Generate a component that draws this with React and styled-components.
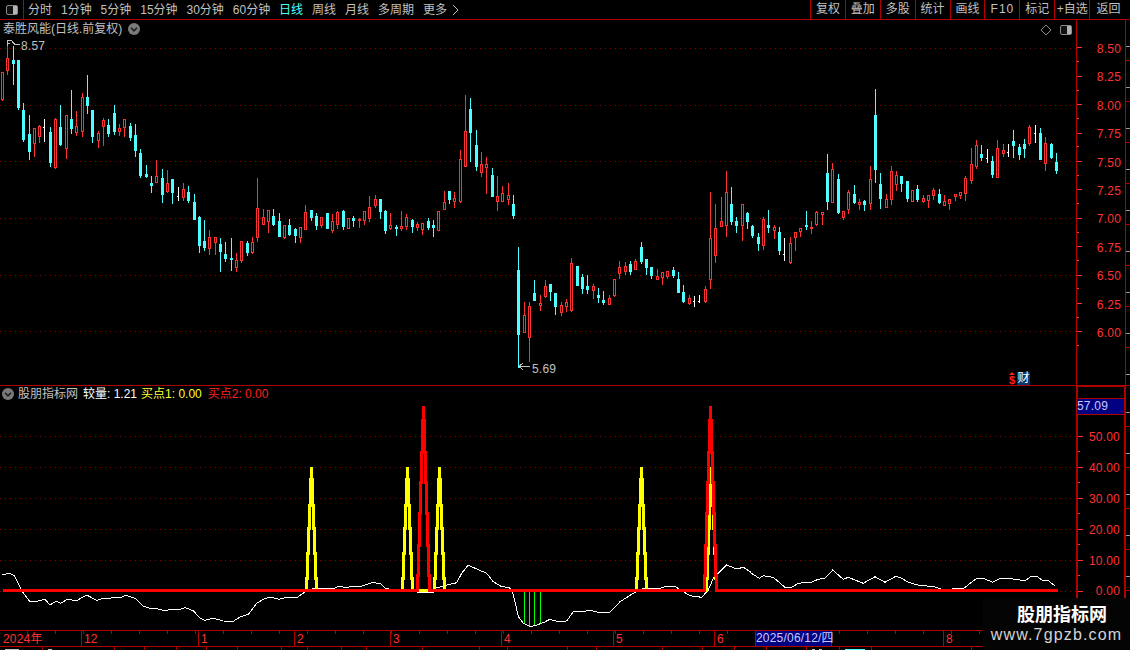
// 日K线 + 副图指标 stock chart screen
import React from "react";
import styled, { createGlobalStyle } from "styled-components";

const RED_LINE = "#b00000";
const RED_TEXT = "#ff3232";
const GREY_TEXT = "#c0c0c0";
const FONT = `"Liberation Sans", "Noto Sans CJK SC", sans-serif`;

const GlobalStyle = createGlobalStyle`
  html, body {
    margin: 0;
    padding: 0;
    background: #000;
  }
  body {
    font-family: ${FONT};
    font-size: 12px;
  }
`;

const Root = styled.div`
  position: relative;
  width: 1130px;
  height: 650px;
  overflow: hidden;
  background: #000;
  color: ${GREY_TEXT};
  display: flex;
  flex-direction: column;
`;

const Toolbar = styled.div`
  display: flex;
  align-items: stretch;
  height: 19px;
  flex: none;
  box-sizing: content-box;
  border-bottom: 1px solid ${RED_LINE};
`;

const ToolIcon = styled.div`
  width: 23px;
  border-right: 1px solid ${RED_LINE};
  display: flex;
  align-items: center;
  justify-content: center;
`;

const Tabs = styled.div`
  display: flex;
  align-items: center;
  gap: 8.95px;
  padding-left: 4px;
  line-height: 18px;
`;

const Tab = styled.span`
  display: flex;
  align-items: center;
  color: ${(p) => (p.$active ? "#4dffff" : GREY_TEXT)};
  white-space: nowrap;
`;

const TabChevron = styled.svg`
  margin-left: 5px;
`;

const Buttons = styled.div`
  display: flex;
  margin-left: auto;
  width: 320px;
`;

const ToolButton = styled.div`
  width: 34.9px;
  flex: ${(p) => (p.$last ? "1" : "none")};
  box-sizing: border-box;
  border-left: 1px solid ${RED_LINE};
  padding-right: ${(p) => (p.$last ? "3px" : "0")};
  line-height: 18px;
  text-align: center;
  white-space: nowrap;
  letter-spacing: ${(p) => (p.$wide ? "1px" : "0")};
`;

const Pane = styled.div`
  display: flex;
  flex: none;
  height: ${(p) => p.$height}px;
  border-bottom: ${(p) => (p.$ruled ? `1px solid ${RED_LINE}` : "none")};
`;

const Plot = styled.div`
  position: relative;
  width: 1076px;
  flex: none;
`;

const ChartSvg = styled.svg`
  display: block;
  width: 1076px;
  height: 100%;
`;

const PaneTitle = styled.div`
  position: absolute;
  left: ${(p) => p.$left}px;
  top: ${(p) => p.$top}px;
  display: flex;
  align-items: center;
  line-height: 16px;
  white-space: nowrap;
`;

const TitleChunk = styled.span`
  color: ${(p) => p.$color || GREY_TEXT};
  margin-left: ${(p) => p.$gap || 0}px;
`;

const RoundIcon = styled.span`
  width: 12px;
  height: 12px;
  border-radius: 50%;
  background: #7a7a7a;
  display: flex;
  align-items: center;
  justify-content: center;
  margin-left: ${(p) => p.$gap || 0}px;
  margin-right: ${(p) => p.$after || 0}px;
`;

const PaneTools = styled.div`
  position: absolute;
  right: 3px;
  top: 4px;
  display: flex;
  align-items: center;
  gap: 7px;
`;

const PriceNote = styled.span`
  position: absolute;
  left: ${(p) => p.$left}px;
  top: ${(p) => p.$top}px;
  line-height: 14px;
  color: ${GREY_TEXT};
  letter-spacing: 0.2px;
`;

const FlagRow = styled.div`
  position: absolute;
  right: 46px;
  bottom: 0;
  height: 13px;
  display: flex;
  align-items: center;
  gap: 2px;
`;

const DollarMark = styled.span`
  display: flex;
  flex-direction: column;
  align-items: center;
  color: #ff2020;
  font-weight: bold;
  font-size: 11px;
  line-height: 9px;

  &::before {
    content: "";
    border-left: 3px solid transparent;
    border-right: 3px solid transparent;
    border-bottom: 3px solid #ff2020;
    margin-bottom: 1px;
  }
`;

const CaiMark = styled.span`
  width: 13px;
  height: 13px;
  background: #003a70;
  color: #fff;
  line-height: 13px;
  font-size: 12px;
  text-align: center;
`;

const Axis = styled.div`
  width: 50px;
  flex: none;
  box-sizing: border-box;
  border-left: ${(p) => (p.$thick ? 2 : 1)}px solid ${RED_LINE};
  border-right: ${(p) => (p.$thick ? 2 : 1)}px solid ${RED_LINE};
  border-top: ${(p) => (p.$thick ? `1px solid ${RED_LINE}` : "none")};
  padding-top: ${(p) => p.$paddingTop}px;
  display: flex;
  flex-direction: column;
`;

const AxisRow = styled.div`
  height: ${(p) => p.$height}px;
  flex: none;
  display: flex;
  align-items: center;
  background: linear-gradient(${RED_TEXT}, ${RED_TEXT}) left bottom / 2px 1px no-repeat;
`;

const AxisTick = styled.span`
  width: 5px;
  height: 1px;
  background: ${RED_TEXT};
`;

const AxisLabel = styled.span`
  margin-left: auto;
  padding-right: 4px;
  padding-top: ${(p) => (p.$low ? 2 : 0)}px;
  color: ${RED_TEXT};
  letter-spacing: 0.2px;
`;

const PriceTag = styled.div`
  height: 15px;
  flex: none;
  margin-bottom: 6.5px;
  margin-left: -1px;
  border-top: 1px solid ${RED_LINE};
  border-bottom: 1px solid ${RED_LINE};
  background: #000080;
  color: #c8c8ff;
  line-height: 15px;
  letter-spacing: 0.2px;
`;

const EdgeStrip = styled.div`
  flex: 1;
  background: repeating-linear-gradient(
    180deg,
    transparent 0 26px,
    #9a9a9a 26px 27px,
    transparent 27px 40px,
    ${RED_LINE} 40px 41px
  );
`;

const DateAxis = styled.div`
  display: flex;
  height: 15px;
  flex: none;
  border-top: 1px solid ${RED_LINE};
  border-bottom: 1px solid ${RED_LINE};
  background: repeating-linear-gradient(90deg, transparent 0 27px, ${RED_LINE} 27px 28px) left top / 100% 3px no-repeat;
`;

const DateCell = styled.div`
  position: relative;
  width: ${(p) => p.$width}px;
  flex: none;
  box-sizing: border-box;
  border-left: ${(p) => (p.$first ? "none" : `1px solid ${RED_LINE}`)};
  padding-left: ${(p) => (p.$first ? 3 : 2)}px;
  color: ${RED_TEXT};
  line-height: 16px;
  letter-spacing: 0.2px;
`;

const DateCursor = styled.div`
  position: absolute;
  left: 40px;
  top: 0;
  width: 77px;
  height: 15px;
  box-sizing: border-box;
  background: #000080;
  border-left: 1px solid ${RED_LINE};
  border-right: 1px solid ${RED_LINE};
  color: #c8c8ff;
  line-height: 15px;
  text-align: center;
  white-space: nowrap;
`;

const BottomStrip = styled.div`
  display: flex;
  flex: 1;
`;

const StripCell = styled.div`
  width: ${(p) => p.$width}px;
  flex: none;
  box-sizing: border-box;
  border-right: 1px solid ${RED_LINE};
  display: flex;
  align-items: flex-end;
  gap: 4px;
  padding-left: 5px;
`;

const StripChip = styled.span`
  width: ${(p) => p.$width}px;
  height: 1px;
  background: ${(p) => p.$color};
`;

const Watermark = styled.div`
  position: absolute;
  left: 983px;
  top: 598px;
  width: 147px;
  height: 52px;
  background: #040404;
  display: flex;
  flex-direction: column;
  align-items: center;
  padding-top: 7px;
  box-sizing: border-box;
`;

const MarkTitle = styled.div`
  color: #fff;
  font-weight: bold;
  font-size: 18px;
  line-height: 20px;
  margin-left: 11px;
  white-space: nowrap;
`;

const MarkUrl = styled.div`
  color: #d4d4d4;
  font-size: 16px;
  line-height: 19px;
  letter-spacing: 1.15px;
  white-space: nowrap;
`;

// kind, wick top, body top, body bottom, wick bottom (page y pixels), one per trading day
const CANDLES = `r72,72,99,100 r41,58,70,74 c46,60,63,84 c60,60,107,109 c103,110,139,141 c115,134,151,159 r128,128,143,156
r125,126,136,142 w119,127,127,141 c127,132,162,166 r118,119,167,168 c105,127,144,145 r115,115,148,158 c90,119,128,133
r111,126,132,135 r93,97,131,136 c75,97,105,113 c110,110,136,142 r131,133,140,147 r118,120,126,145 c119,125,133,136
c105,113,131,134 r124,128,131,135 r119,119,127,136 c123,126,137,140 c124,135,150,156 c149,153,175,177 c165,174,176,177
c176,183,185,192 r160,176,182,182 c169,178,194,202 r170,183,191,192 c179,179,192,203 w187,196,196,200 r183,189,197,200
c186,192,200,202 c194,202,219,219 c216,217,245,252 c220,241,247,250 r230,237,248,254 r237,237,242,254 c238,244,251,271
c242,254,258,261 c238,258,259,270 r253,260,267,271 r241,241,260,262 c241,243,252,255 r237,242,252,253 r178,208,237,241
r209,217,224,224 r210,210,221,232 c209,216,224,225 c213,221,236,236 r225,225,237,238 c219,225,234,235 c228,229,235,242
r227,227,237,242 r205,212,229,229 c210,210,217,220 c213,216,225,229 r217,217,225,227 c213,213,228,228 r214,221,230,232
r211,212,224,228 c210,211,226,229 r218,218,228,228 c216,218,220,226 r218,219,220,227 r211,211,220,224 r196,207,218,221
r195,199,205,207 c199,199,211,218 c210,211,230,233 r213,225,228,229 c225,227,228,235 r211,226,228,230 r214,217,226,229
c219,220,226,232 r222,224,227,230 r223,223,229,234 c218,221,227,229 c220,225,227,236 r211,211,230,230 r191,202,209,209
c191,191,199,203 r192,198,201,207 r150,159,201,202 r95,131,166,166 c98,109,132,161 c130,145,166,170 r152,164,172,176
r157,164,167,193 c168,175,196,196 r176,196,201,210 r186,193,201,201 r183,195,199,204 c195,204,215,218 c247,270,334,367
r302,315,332,332 r302,306,337,361 c280,293,300,300 r295,303,305,310 r280,286,296,297 c284,284,291,300 c293,293,306,314
r302,305,312,315 r299,302,306,311 r258,263,310,311 c266,266,285,285 c274,277,288,293 c275,286,289,293 r284,286,290,298
c288,295,297,302 c291,300,302,304 r295,298,304,304 r279,279,295,296 r261,267,273,278 r262,266,271,274 c261,264,271,274
r259,261,269,269 c242,247,261,263 c259,259,267,274 c267,267,275,278 r269,276,279,279 r272,272,277,284 r271,271,276,278
c267,270,275,277 c272,279,292,292 c285,292,301,302 r295,298,303,304 w296,301,301,306 w295,301,301,302 r286,289,301,302
r192,238,279,288 r204,228,255,262 r197,221,226,226 r171,192,225,236 c187,204,221,224 c217,221,225,232 r204,204,225,240
c212,213,221,228 c225,226,235,237 c233,237,243,250 r217,219,245,249 c210,225,227,232 r225,227,230,238 c227,232,250,254
w238,254,254,260 r237,243,262,263 r232,232,237,250 r228,228,231,236 c211,225,226,229 r221,227,228,233 r211,212,224,225
r212,212,214,224 c154,173,201,209 r163,169,202,202 c174,179,212,213 r211,211,217,219 r190,192,209,213 c185,194,202,203
r199,202,204,209 c200,201,204,210 r166,179,203,209 c89,115,169,182 c173,184,198,208 r194,199,207,207 r166,171,199,204
r171,175,184,190 c176,176,183,191 c181,181,198,201 r190,190,201,201 c185,189,199,201 r195,198,201,202 r195,195,200,207
r188,190,195,199 c189,194,202,203 r195,201,205,205 r199,199,203,209 r194,194,196,200 r192,192,195,198 r176,178,193,200
r148,164,180,183 r140,145,166,168 c145,154,157,160 w149,158,158,162 c156,161,174,177 r140,148,177,177 r144,150,153,156
w144,152,152,156 c130,141,145,157 c144,147,154,159 c139,144,148,157 r125,127,143,145 w125,133,133,142 c128,133,159,159
r137,143,163,170 c143,144,157,158 c153,162,170,173`
  .split(/\s+/)
  .map((item) => {
    const [top, bodyTop, bodyBottom, bottom] = item.slice(1).split(",").map(Number);
    return { kind: item[0], top, bodyTop, bodyBottom, bottom };
  });

const CANDLE_COLOR = { r: "#ff3232", c: "#4dffff", w: "#ffffff" };

const Candle = ({ x, kind, top, bodyTop, bodyBottom, bottom }) => {
  const color = CANDLE_COLOR[kind];
  if (kind === "w") {
    return (
      <g fill={color}>
        <rect x={x} y={top} width={1} height={bottom - top + 1} />
        <rect x={x - 1} y={bodyTop} width={1} height={1} />
      </g>
    );
  }
  const height = bodyBottom - bodyTop + 1;
  return (
    <g fill={color}>
      <rect x={x} y={top} width={1} height={bottom - top + 1} />
      <rect x={x - 1} y={bodyTop} width={3} height={height} />
      {kind === "r" && height > 2 && <rect x={x} y={bodyTop + 1} width={1} height={height - 2} fill="#000" />}
    </g>
  );
};

const dotted = (y, to = 1076) => (
  <line key={y} x1={0} x2={to} y1={y + 0.5} y2={y + 0.5} stroke="#8c0000" strokeWidth={1} strokeDasharray="1 4" />
);

// a spike is a staircase of short verticals going up to a peak and back to the zero line
const YELLOW_STEPS = [[5, 578], [4, 553], [3, 528], [2, 505], [1, 479], [0, 466]];
const RED_STEPS = [[6, 575], [5, 545], [4, 513], [3, 482], [2, 452], [1, 420], [0, 405]];

const spikePath = (cx, steps) => {
  let d = `L${cx - steps[0][0]} 590`;
  steps.forEach(([dx, y], i) => {
    if (i > 0) d += `L${cx - dx} ${steps[i - 1][1]}`;
    d += `L${cx - dx} ${y}`;
  });
  for (let i = steps.length - 1; i >= 0; i--) {
    d += `L${cx + steps[i][0]} ${steps[i][1]}`;
    d += `L${cx + steps[i][0]} ${i > 0 ? steps[i - 1][1] : 590}`;
  }
  return d;
};

const linePath = (centres, steps) => `M2 590${centres.map((c) => spikePath(c, steps)).join("")}L1057 590`;

const z9 = (pts) => pts.map(([x, y]) => `${(x / 3).toFixed(1)},${(560 + y / 3).toFixed(1)}`);
const z10 = (pts) => pts.map(([x, y]) => `${(380 + x / 3).toFixed(1)},${(560 + y / 3).toFixed(1)}`);
const z11 = (pts) => pts.map(([x, y]) => `${(750 + x / 3).toFixed(1)},${(560 + y / 3).toFixed(1)}`);

const WHITE_LINE = [
  ...z9([[5,43],[30,41],[42,46],[52,65],[65,92],[88,123],[110,124],[135,118],[150,135],[168,124],[182,130],[200,119],[232,121],[260,105],[290,121],[310,115],[360,113],[378,106],[405,115],[430,138],[455,147],[470,146],[490,151],[540,148],[555,143],[580,152],[600,175],[615,181],[640,175],[670,183],[700,184],[720,171],[745,163],[770,130],[795,115],[815,112],[838,118],[855,113],[890,113],[915,96],[925,88],[960,85],[975,86],[1000,86],[1015,79],[1035,82],[1085,78],[1115,68],[1140,70]]),
  ...z10([[0,70],[15,85],[40,90],[100,92],[115,97],[160,97],[165,85],[190,78],[230,68],[245,40],[265,15],[285,25],[320,40],[340,65],[365,80],[385,82],[395,88],[405,125],[415,170],[430,190],[450,200],[470,195],[490,188],[510,178],[530,184],[560,183],[580,155],[635,152],[655,157],[690,157],[720,125],[760,100],[790,85],[840,85],[860,79],[885,79],[905,92],[930,107],[965,112],[985,90],[1000,55],[1040,15],[1070,27],[1090,22],[1110,35]]),
  ...z11([[0,37],[28,55],[40,47],[70,52],[105,82],[125,82],[145,70],[185,66],[205,58],[225,55],[248,30],[280,58],[295,52],[340,70],[375,50],[405,67],[435,50],[450,52],[475,67],[510,77],[550,79],[575,88],[640,86],[680,55],[700,55],[728,67],[750,55],[790,57],[825,62],[845,48],[860,48],[875,60],[895,62],[915,78]]),
].join(" ");

const GREEN_BARS = [
  [524, 623],
  [529, 626],
  [534, 625],
  [540, 623],
];

const MAIN_LABELS = ["8.50", "8.25", "8.00", "7.75", "7.50", "7.25", "7.00", "6.75", "6.50", "6.25", "6.00"];
const SUB_LABELS = ["50.00", "40.00", "30.00", "20.00", "10.00", "0.00"];
const TABS = ["分时", "1分钟", "5分钟", "15分钟", "30分钟", "60分钟", "日线", "周线", "月线", "多周期", "更多"];
const TOOL_BUTTONS = ["复权", "叠加", "多股", "统计", "画线", "F10", "标记", "+自选"];
const DATE_CELLS = [
  ["2024年", 81],
  ["12", 117],
  ["1", 96],
  ["2", 96],
  ["3", 111],
  ["4", 112],
  ["5", 101],
  ["6", 229],
  ["8", 200],
];
// bottom tab row, only its top edge is on screen
const STRIP_CELLS = [
  [43, [[14, "#c0c0c0"]]],
  [72, [[4, "#c0c0c0"]]],
  [30], [32], [30], [31], [44], [26], [34], [25], [56], [57], [28], [60], [29], [66], [40], [32], [32], [40],
  [33, [[3, "#c0c0c0"], [3, "#c0c0c0"]]],
  [32, [[20, "#4dffff"]]],
  [100],
];

const SplitIcon = () => (
  <svg width="14" height="12" viewBox="0 0 14 12">
    <rect x="1.5" y="1.5" width="11" height="9" rx="1.5" fill="#111" stroke="#8a8a8a" />
    <rect x="8" y="2" width="4" height="8" fill="#b4b4b4" />
  </svg>
);

const Chevron = () => (
  <svg width="12" height="12" viewBox="0 0 12 12">
    <path d="M3 4.8 L6 7.8 L9 4.8" fill="none" stroke="#1c1c1c" strokeWidth="1.6" />
  </svg>
);

const App = () => (
  <Root>
    <GlobalStyle />
    <Toolbar>
      <ToolIcon>
        <SplitIcon />
      </ToolIcon>
      <Tabs>
        {TABS.map((tab) => (
          <Tab key={tab} $active={tab === "日线"}>
            {tab}
            {tab === "更多" && (
              <TabChevron width="7" height="12" viewBox="0 0 7 12">
                <path d="M1 1 L6 6 L1 11" fill="none" stroke="#c0c0c0" />
              </TabChevron>
            )}
          </Tab>
        ))}
      </Tabs>
      <Buttons>
        {TOOL_BUTTONS.map((label) => (
          <ToolButton key={label} $wide={label === "F10"}>
            {label}
          </ToolButton>
        ))}
        <ToolButton $last>返回</ToolButton>
      </Buttons>
    </Toolbar>

    <Pane $height={365} $ruled>
      <Plot>
        <ChartSvg viewBox="0 20 1076 365" shapeRendering="crispEdges">
          {[48, 105, 161, 218, 275, 331].map((y) => dotted(y))}
          {CANDLES.map((c, i) => (
            <Candle key={i} x={Math.floor(2.4 + 5.323 * i)} {...c} />
          ))}
          <g fill="none" stroke="#c0c0c0">
            <path d="M7.5 46V40.5H11.5M7.5 43.5H10M12 41.5L15 44.5H20" />
            <path d="M530 366.5H519M519 366.5L523 363M519 366.5L523 370" />
          </g>
        </ChartSvg>
        <PaneTitle $left={3} $top={1}>
          <TitleChunk>泰胜风能(日线.前复权)</TitleChunk>
          <RoundIcon $gap={6}>
            <Chevron />
          </RoundIcon>
        </PaneTitle>
        <PaneTools>
          <svg width="12" height="12" viewBox="0 0 12 12">
            <path d="M6 1L11 6L6 11L1 6Z" fill="none" stroke="#8a8a8a" />
          </svg>
          <SplitIcon />
        </PaneTools>
        <PriceNote $left={21} $top={19}>
          8.57
        </PriceNote>
        <PriceNote $left={532} $top={342}>
          5.69
        </PriceNote>
        <FlagRow>
          <DollarMark>$</DollarMark>
          <CaiMark>财</CaiMark>
        </FlagRow>
      </Plot>
      <Axis $paddingTop={13.8}>
        {MAIN_LABELS.map((label) => (
          <AxisRow key={label} $height={28.4}>
            <AxisTick />
            <AxisLabel $low>{label}</AxisLabel>
          </AxisRow>
        ))}
      </Axis>
      <EdgeStrip />
    </Pane>

    <Pane $height={244}>
      <Plot>
        <ChartSvg viewBox="0 386 1076 244" shapeRendering="crispEdges">
          {[436, 467, 498, 529, 560, 591].map((y) => dotted(y))}
          <polyline points={WHITE_LINE} fill="none" stroke="#fff" strokeWidth={1} />
          {GREEN_BARS.map(([x, y]) => (
            <rect key={x} x={x} y={592} width={1} height={y - 592} fill="#00ff00" />
          ))}
          <g transform="translate(0.5 0.5)" fill="none" strokeWidth={3}>
            <path d={linePath([311, 407, 439, 641, 711], YELLOW_STEPS)} stroke="#ffff00" />
            <path d={linePath([423, 710], RED_STEPS)} stroke="#ff0000" />
          </g>
        </ChartSvg>
        <PaneTitle $left={2} $top={0}>
          <RoundIcon $after={4}>
            <Chevron />
          </RoundIcon>
          <TitleChunk>股朋指标网</TitleChunk>
          <TitleChunk $color="#fff" $gap={5}>
            较量: 1.21
          </TitleChunk>
          <TitleChunk $color="#ffff33" $gap={4}>
            买点1: 0.00
          </TitleChunk>
          <TitleChunk $color="#ff2020" $gap={6}>
            买点2: 0.00
          </TitleChunk>
        </PaneTitle>
      </Plot>
      <Axis $thick $paddingTop={11}>
        <PriceTag>57.09</PriceTag>
        {SUB_LABELS.map((label) => (
          <AxisRow key={label} $height={30.9}>
            <AxisTick />
            <AxisLabel>{label}</AxisLabel>
          </AxisRow>
        ))}
      </Axis>
      <EdgeStrip />
    </Pane>

    <DateAxis>
      {DATE_CELLS.map(([label, width], i) => (
        <DateCell key={label} $width={width} $first={i === 0}>
          {label}
          {label === "6" && <DateCursor>2025/06/12/四</DateCursor>}
        </DateCell>
      ))}
    </DateAxis>
    <BottomStrip>
      {STRIP_CELLS.map(([width, chips = []], i) => (
        <StripCell key={i} $width={width}>
          {chips.map(([w, color], k) => (
            <StripChip key={k} $width={w} $color={color} />
          ))}
        </StripCell>
      ))}
    </BottomStrip>

    <Watermark>
      <MarkTitle>股朋指标网</MarkTitle>
      <MarkUrl>www.7gpzb.com</MarkUrl>
    </Watermark>
  </Root>
);

export default App;
